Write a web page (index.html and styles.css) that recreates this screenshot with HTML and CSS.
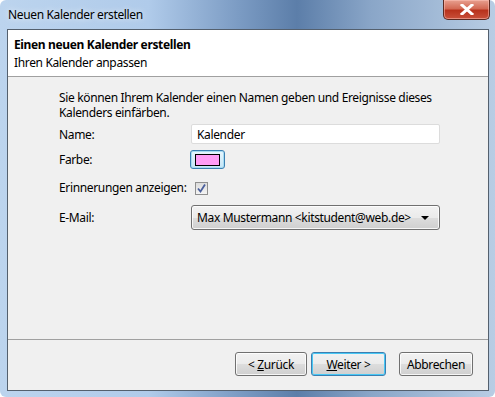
FILE: index.html
```html
<!DOCTYPE html>
<html lang="de">
<head>
    <meta charset="UTF-8">
    <title>Neuen Kalender erstellen</title>
    <link rel="stylesheet" href="styles.css">
</head>
<body>
    <div class="window">
        <div class="titlebar">
            <span class="title">Neuen Kalender erstellen</span>
            <span class="close">
                <svg width="14" height="11" viewBox="0 0 14 11">
                    <path d="M2 1 L12 10 M12 1 L2 10" stroke="#fff" stroke-width="3" stroke-linecap="square"/>
                </svg>
            </span>
        </div>
        <div class="client">
            <div class="header">
                <div class="header-title">Einen neuen Kalender erstellen</div>
                <div class="header-sub">Ihren Kalender anpassen</div>
            </div>
            <div class="content">
                <p class="intro">Sie können Ihrem Kalender einen Namen geben und Ereignisse dieses Kalenders einfärben.</p>
                <div class="form">
                    <label class="label">Name:</label>
                    <div class="text-input">Kalender</div>

                    <label class="label">Farbe:</label>
                    <div><span class="color-button"><span class="swatch"></span></span></div>

                    <label class="label">Erinnerungen anzeigen:</label>
                    <div>
                        <span class="checkbox">
                            <svg width="11" height="11" viewBox="0 0 11 11">
                                <path d="M2 5.5 L4.5 8.5 L9 1.5" fill="none" stroke="#4a5f9c" stroke-width="1.8"/>
                            </svg>
                        </span>
                    </div>

                    <label class="label">E-Mail:</label>
                    <div class="select">
                        <span>Max Mustermann &lt;kitstudent@web.de&gt;</span>
                        <span class="arrow"></span>
                    </div>
                </div>
            </div>
            <div class="footer">
                <button class="btn">&lt; <u>Z</u>urück</button>
                <button class="btn default"><u>W</u>eiter &gt;</button>
                <button class="btn cancel">Abbrechen</button>
            </div>
        </div>
    </div>
</body>
</html>
```

FILE: styles.css
```css
* {
    box-sizing: border-box;
}
body {
    margin: 0;
    background: #fff;
    font-family: "Noto Sans", "Open Sans", sans-serif;
    font-size: 12px;
    letter-spacing: -0.35px;
    color: #000;
}
.window {
    width: 495px;
    height: 397px;
    padding: 0 6px 6px 7px;
    display: flex;
    flex-direction: column;
    background: linear-gradient(90deg, #bcd4ee 0%, #b0cbea 30%, #7c9cc4 48%, #5c7ea9 60%, #8aa6c8 75%, #b8cde4 100%);
    border-radius: 6px;
}
.titlebar {
    height: 29px;
    display: flex;
    justify-content: space-between;
    align-items: flex-start;
}
.title {
    margin-top: 6px;
    margin-left: 1px;
    text-shadow: 0 0 6px rgba(255, 255, 255, 0.9);
}
.close {
    width: 47px;
    height: 20px;
    margin-right: -1px;
    display: flex;
    align-items: center;
    justify-content: center;
    border: 1px solid #5b2a22;
    border-top: none;
    border-radius: 0 0 5px 5px;
    background: linear-gradient(#e8a090 0%, #d36a55 45%, #b8321c 55%, #c9503a 100%);
    box-shadow: inset 0 0 0 1px rgba(255, 200, 190, 0.5);
}
.client {
    flex: 1;
    display: flex;
    flex-direction: column;
    border: 1px solid #54606e;
    background: #f0f0f0;
}
.header {
    height: 47px;
    padding: 6px 0 0 6px;
    background: #fff;
    border-bottom: 1px solid #a0a0a0;
}
.header-title {
    font-weight: bold;
    height: 18px;
}
.content {
    flex: 1;
    padding: 13px 0 0 51px;
}
.intro {
    margin: 0;
    width: 400px;
    line-height: 15px;
}
.form {
    margin-top: 4px;
    display: grid;
    grid-template-columns: 132px 249px;
    row-gap: 6px;
    align-items: center;
}
.text-input {
    height: 20px;
    padding: 1px 0 0 5px;
    background: #fff;
    border: 1px solid #dcdcdc;
    border-radius: 2px;
}
.color-button {
    width: 35px;
    height: 19px;
    margin-left: -1px;
    display: flex;
    align-items: center;
    justify-content: center;
    border: 1px solid #3c7fb1;
    border-radius: 3px;
    background: linear-gradient(#e8f6fd, #c4e5f6);
    box-shadow: inset 0 0 0 1px #a7dcf3;
}
.swatch {
    width: 25px;
    height: 12px;
    background: #ff9cf5;
    border: 1px solid #000;
}
.checkbox {
    width: 13px;
    height: 13px;
    margin: 7px 0 4px 4px;
    display: flex;
    align-items: center;
    justify-content: center;
    border: 1px solid #8f8f8f;
    background: linear-gradient(#dcdcdc, #f4f4f4);
}
.select {
    height: 25px;
    display: flex;
    align-items: center;
    justify-content: space-between;
    padding: 0 10px 0 5px;
    border: 1px solid #707070;
    border-radius: 3px;
    background: linear-gradient(#f2f2f2 0%, #ebebeb 50%, #dddddd 51%, #cfcfcf 100%);
    box-shadow: inset 0 0 0 1px rgba(255, 255, 255, 0.8);
}
.arrow {
    width: 0;
    height: 0;
    border-left: 4px solid transparent;
    border-right: 4px solid transparent;
    border-top: 4px solid #000;
}
.footer {
    height: 51px;
    border-top: 1px solid #a0a0a0;
    display: flex;
    align-items: center;
    justify-content: flex-end;
    padding: 0 15px 2px 0;
    gap: 4px;
}
.btn {
    width: 72px;
    height: 24px;
    padding: 0;
    font-family: inherit;
    font-size: 12px;
    letter-spacing: -0.35px;
    color: #000;
    border: 1px solid #707070;
    border-radius: 3px;
    background: linear-gradient(#f2f2f2 0%, #ebebeb 50%, #dddddd 51%, #cfcfcf 100%);
    box-shadow: inset 0 0 0 1px rgba(255, 255, 255, 0.8);
}
.btn u {
    text-decoration-thickness: 1px;
}
.btn.default {
    width: 75px;
    border-color: #3c7fb1;
    box-shadow: inset 0 0 0 1px #48c8f5;
}
.btn.cancel {
    width: 74px;
    margin-left: 9px;
}
```
